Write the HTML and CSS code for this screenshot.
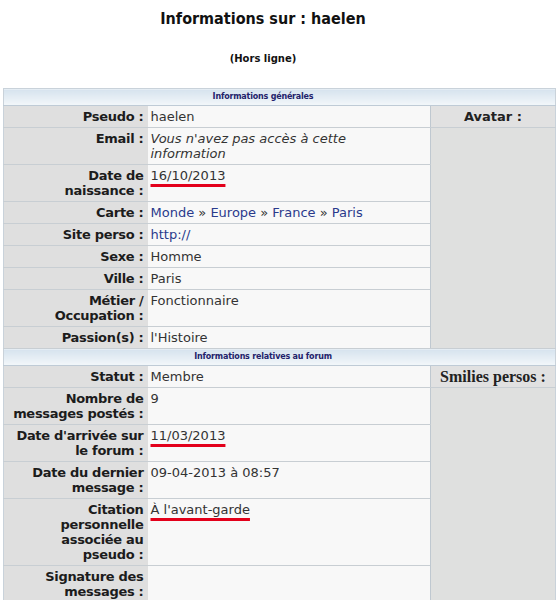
FILE: index.html
```html
<!DOCTYPE html>
<html lang="fr">
  <head>
    <meta charset="UTF-8" />
    <meta name="viewport" content="width=device-width, initial-scale=1.0" />
    <title>Informations sur : haelen</title>
    <link rel="stylesheet" href="styles.css">
  </head>
  <body>
    <h1 class="title">Informations sur : haelen</h1>
    <p class="status">(Hors ligne)</p>

    <table class="profile">
      <colgroup>
        <col class="col-label" />
        <col class="col-value" />
        <col class="col-side" />
      </colgroup>
      <tr>
        <th class="section" colspan="3">Informations générales</th>
      </tr>
      <tr>
        <td class="label">Pseudo :</td>
        <td class="value">haelen</td>
        <td class="side-head">Avatar :</td>
      </tr>
      <tr>
        <td class="label">Email :</td>
        <td class="value"><em>Vous n'avez pas accès à cette information</em></td>
        <td class="side" rowspan="8"></td>
      </tr>
      <tr>
        <td class="label">Date de<br />naissance :</td>
        <td class="value"><span class="marked">16/10/2013</span></td>
      </tr>
      <tr>
        <td class="label">Carte :</td>
        <td class="value"><a href="#">Monde</a> » <a href="#">Europe</a> » <a href="#">France</a> » <a href="#">Paris</a></td>
      </tr>
      <tr>
        <td class="label">Site perso :</td>
        <td class="value"><a href="#">http://</a></td>
      </tr>
      <tr>
        <td class="label">Sexe :</td>
        <td class="value">Homme</td>
      </tr>
      <tr>
        <td class="label">Ville :</td>
        <td class="value">Paris</td>
      </tr>
      <tr>
        <td class="label">Métier / Occupation :</td>
        <td class="value">Fonctionnaire</td>
      </tr>
      <tr>
        <td class="label">Passion(s) :</td>
        <td class="value">l'Histoire</td>
      </tr>
      <tr>
        <th class="section" colspan="3">Informations relatives au forum</th>
      </tr>
      <tr>
        <td class="label">Statut :</td>
        <td class="value">Membre</td>
        <td class="side-head smilies">Smilies persos :</td>
      </tr>
      <tr>
        <td class="label">Nombre de messages postés :</td>
        <td class="value">9</td>
        <td class="side" rowspan="5"></td>
      </tr>
      <tr>
        <td class="label">Date d'arrivée sur le forum :</td>
        <td class="value"><span class="marked">11/03/2013</span></td>
      </tr>
      <tr>
        <td class="label">Date du dernier message :</td>
        <td class="value">09-04-2013 à 08:57</td>
      </tr>
      <tr>
        <td class="label">Citation personnelle associée au pseudo :</td>
        <td class="value"><span class="marked">À l'avant-garde</span></td>
      </tr>
      <tr>
        <td class="label">Signature des messages :</td>
        <td class="value"></td>
      </tr>
    </table>
  </body>
</html>
```

FILE: styles.css
```css
body {
  margin: 0;
  padding: 9px 3px 0;
  background-color: #fff;
  font-family: "DejaVu Sans", Verdana, sans-serif;
  color: #222;
}
.title {
  margin: 0 33px 0 0;
  font-family: "DejaVu Sans Condensed", "DejaVu Sans", sans-serif;
  font-size: 16px;
  line-height: 20px;
  text-align: center;
  color: #111;
}
.status {
  margin: 23px 33px 0 0;
  font-size: 10px;
  line-height: 14px;
  font-weight: bold;
  text-align: center;
  color: #111;
}
.profile {
  margin-top: 22px;
  width: 100%;
  border-collapse: collapse;
  border: 1px solid #c9d2da;
  font-size: 13px;
  line-height: 15px;
  table-layout: fixed;
}
.col-label {
  width: 144px;
}
.col-side {
  width: 125px;
}
.profile td {
  padding: 3px 4px;
  vertical-align: top;
  border-bottom: 1px solid #c8ced3;
}
.section {
  padding: 2px 35px 2px 2px;
  font-size: 8px;
  line-height: 12px;
  letter-spacing: -0.2px;
  font-weight: bold;
  color: #23236b;
  background: linear-gradient(#d6e3ee, #f3f7fa);
  border-bottom: 1px solid #bfcbd6;
}
.label {
  text-align: right;
  font-weight: bold;
  letter-spacing: -0.3px;
  background-color: #dfdfdf;
  color: #1c1c1c;
}
.profile .value {
  padding: 3px 8px 3px 3px;
  background-color: #f8f8f8;
  color: #333;
}
.value a {
  color: #2a3a8c;
  text-decoration: none;
}
.side-head {
  text-align: center;
  font-weight: bold;
  background-color: #e1e1e1;
  border-left: 1px solid #bfc8d0;
}
.side {
  background-color: #dfe0df;
  border-left: 1px solid #bfc8d0;
}
.smilies {
  font-family: "Liberation Serif", serif;
  font-size: 16px;
}
.marked {
  text-decoration: underline #e3001b 3px;
  text-underline-offset: 4px;
  text-decoration-skip-ink: none;
}
```
